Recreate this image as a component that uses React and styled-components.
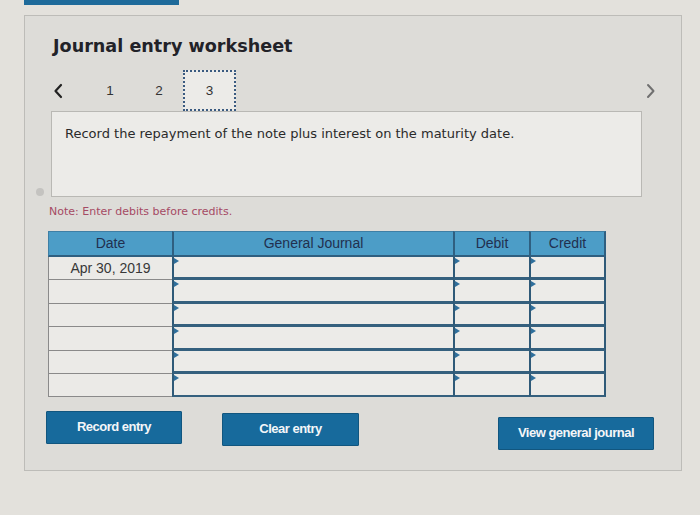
import React from "react";
import styled, { createGlobalStyle } from "styled-components";

const Global = createGlobalStyle`
  html, body { margin: 0; padding: 0; }
  body {
    background: #e3e1dc;
    width: 700px;
    height: 515px;
    overflow: hidden;
    font-family: "DejaVu Sans", Verdana, sans-serif;
  }
`;

const Page = styled.div`
  width: 700px;
  height: 515px;
  position: relative;
`;

const TopTab = styled.div`
  width: 155px;
  height: 5px;
  margin-left: 24px;
  background: #1e6a9a;
`;

const Panel = styled.div`
  position: relative;
  box-sizing: border-box;
  margin: 10px 0 0 24px;
  width: 658px;
  height: 456px;
  background: #dddcd8;
  border: 1px solid #bdbcb8;
  padding: 19px 0 0 26px;
`;

const Title = styled.h1`
  margin: 0 0 0 2px;
  font-family: "DejaVu Sans", Verdana, sans-serif;
  font-weight: bold;
  font-size: 17.6px;
  color: #222228;
  line-height: 22px;
`;

const NavRow = styled.div`
  display: flex;
  align-items: center;
  height: 41px;
  margin-top: 13px;
  width: 607px;
`;

const Chevron = styled.span`
  display: flex;
  width: 12px;
  margin-left: 2px;
  color: ${(p) => (p.$muted ? "#707070" : "#222")};
`;

const Step = styled.span`
  display: flex;
  align-items: center;
  justify-content: center;
  font-family: "Liberation Sans", Arial, sans-serif;
  font-size: 13.5px;
  color: #333;
  width: 20px;
  margin-left: ${(p) => p.$ml}px;
`;

const ActiveStep = styled(Step)`
  box-sizing: border-box;
  height: 41px;
  width: 53px;
  border: 2px dotted #3a5a80;
  background: #ecebe8;
`;

const Spacer = styled.div`
  flex: 1;
`;

const Prompt = styled.div`
  box-sizing: border-box;
  width: 591px;
  height: 86px;
  background: #ecebe8;
  border: 1px solid #b9b8b4;
  padding: 13px 13px;
  font-size: 13px;
  line-height: 17px;
  color: #2a2a2a;
`;

const Dot = styled.span`
  position: absolute;
  left: 11px;
  top: 172px;
  width: 8px;
  height: 8px;
  border-radius: 50%;
  background: #c4c3c0;
`;

const Note = styled.p`
  margin: 8px 0 0 -2px;
  font-size: 11px;
  line-height: 14px;
  color: #a54a64;
`;

const Table = styled.div`
  display: grid;
  grid-template-columns: 124px 281px 76px 77px;
  margin: 12px 0 0 -3px;
  width: 558px;
`;

const Head = styled.div`
  box-sizing: border-box;
  height: 26px;
  background: #4c9dc7;
  border-top: 1px solid #3e7fa5;
  border-bottom: 2px solid #2f5f80;
  border-left: ${(p) => (p.$first ? "1px solid #3e7fa5" : "2px solid #2f5f80")};
  border-right: ${(p) => (p.$last ? "2px solid #2f5f80" : "0")};
  display: flex;
  align-items: center;
  justify-content: center;
  font-family: "Liberation Sans", Arial, sans-serif;
  font-size: 14px;
  color: #22304f;
  padding-bottom: 2px;
`;

const DateCell = styled.div`
  box-sizing: border-box;
  height: 23.4px;
  background: #ebeae7;
  border-left: 1px solid #8a8a8a;
  border-bottom: 1px solid #8a8a8a;
  display: flex;
  align-items: center;
  justify-content: center;
  font-family: "Liberation Sans", Arial, sans-serif;
  font-size: 14px;
  color: #383838;
`;

const InputCell = styled.div`
  position: relative;
  box-sizing: border-box;
  height: 23.4px;
  background: #ecebe8;
  border-left: 2px solid #2f5a78;
  border-right: ${(p) => (p.$last ? "2px solid #2f5a78" : "0")};
  border-bottom: ${(p) => (p.$lastRow ? "2px" : "3px")} solid #35607e;
  &::before {
    content: "";
    position: absolute;
    left: 0;
    top: 1px;
    border-top: 3px solid transparent;
    border-bottom: 3px solid transparent;
    border-left: 5px solid #2f6f9c;
  }
`;

const ButtonRow = styled.div`
  display: flex;
  align-items: flex-start;
  margin: 14px 0 0 -5px;
  width: 608px;
`;

const Button = styled.button`
  box-sizing: border-box;
  width: ${(p) => p.$w}px;
  height: 33px;
  margin-top: ${(p) => p.$dy || 0}px;
  margin-left: ${(p) => p.$ml || 0}px;
  background: #176a9c;
  border: 1px solid #11567f;
  border-radius: 1px;
  color: #f4f6f8;
  font-family: "Liberation Sans Narrow", "Arial Narrow", "Liberation Sans", Arial, sans-serif;
  font-stretch: condensed;
  font-weight: bold;
  font-size: 13px;
  letter-spacing: -0.5px;
  padding: 0 0 3px;
`;

const ChevronLeft = () => (
  <svg width="10" height="16" viewBox="0 0 10 16">
    <path d="M8 2 L2.5 8 L8 14" fill="none" stroke="currentColor" strokeWidth="2.2" strokeLinecap="round" strokeLinejoin="round" />
  </svg>
);

const ChevronRight = () => (
  <svg width="10" height="16" viewBox="0 0 10 16">
    <path d="M2 2 L7.5 8 L2 14" fill="none" stroke="currentColor" strokeWidth="2" strokeLinecap="round" strokeLinejoin="round" />
  </svg>
);

const rows = ["Apr 30, 2019", "", "", "", "", ""];

export default function App() {
  return (
    <Page>
      <Global />
      <TopTab />
      <Panel>
        <Title>Journal entry worksheet</Title>
        <NavRow>
          <Chevron>
            <ChevronLeft />
          </Chevron>
          <Step $ml={35}>1</Step>
          <Step $ml={29}>2</Step>
          <ActiveStep $ml={14}>3</ActiveStep>
          <Spacer />
          <Chevron $muted>
            <ChevronRight />
          </Chevron>
        </NavRow>
        <Prompt>Record the repayment of the note plus interest on the maturity date.</Prompt>
        <Dot />
        <Note>Note: Enter debits before credits.</Note>
        <Table>
          <Head $first>Date</Head>
          <Head>General Journal</Head>
          <Head>Debit</Head>
          <Head $last>Credit</Head>
          {rows.map((d, i) => (
            <React.Fragment key={i}>
              <DateCell>{d}</DateCell>
              <InputCell $lastRow={i === rows.length - 1} />
              <InputCell $lastRow={i === rows.length - 1} />
              <InputCell $last $lastRow={i === rows.length - 1} />
            </React.Fragment>
          ))}
        </Table>
        <ButtonRow>
          <Button $w={136}>Record entry</Button>
          <Button $w={137} $ml={40} $dy={2}>Clear entry</Button>
          <Button $w={156} $ml={139} $dy={6}>View general journal</Button>
        </ButtonRow>
      </Panel>
    </Page>
  );
}
